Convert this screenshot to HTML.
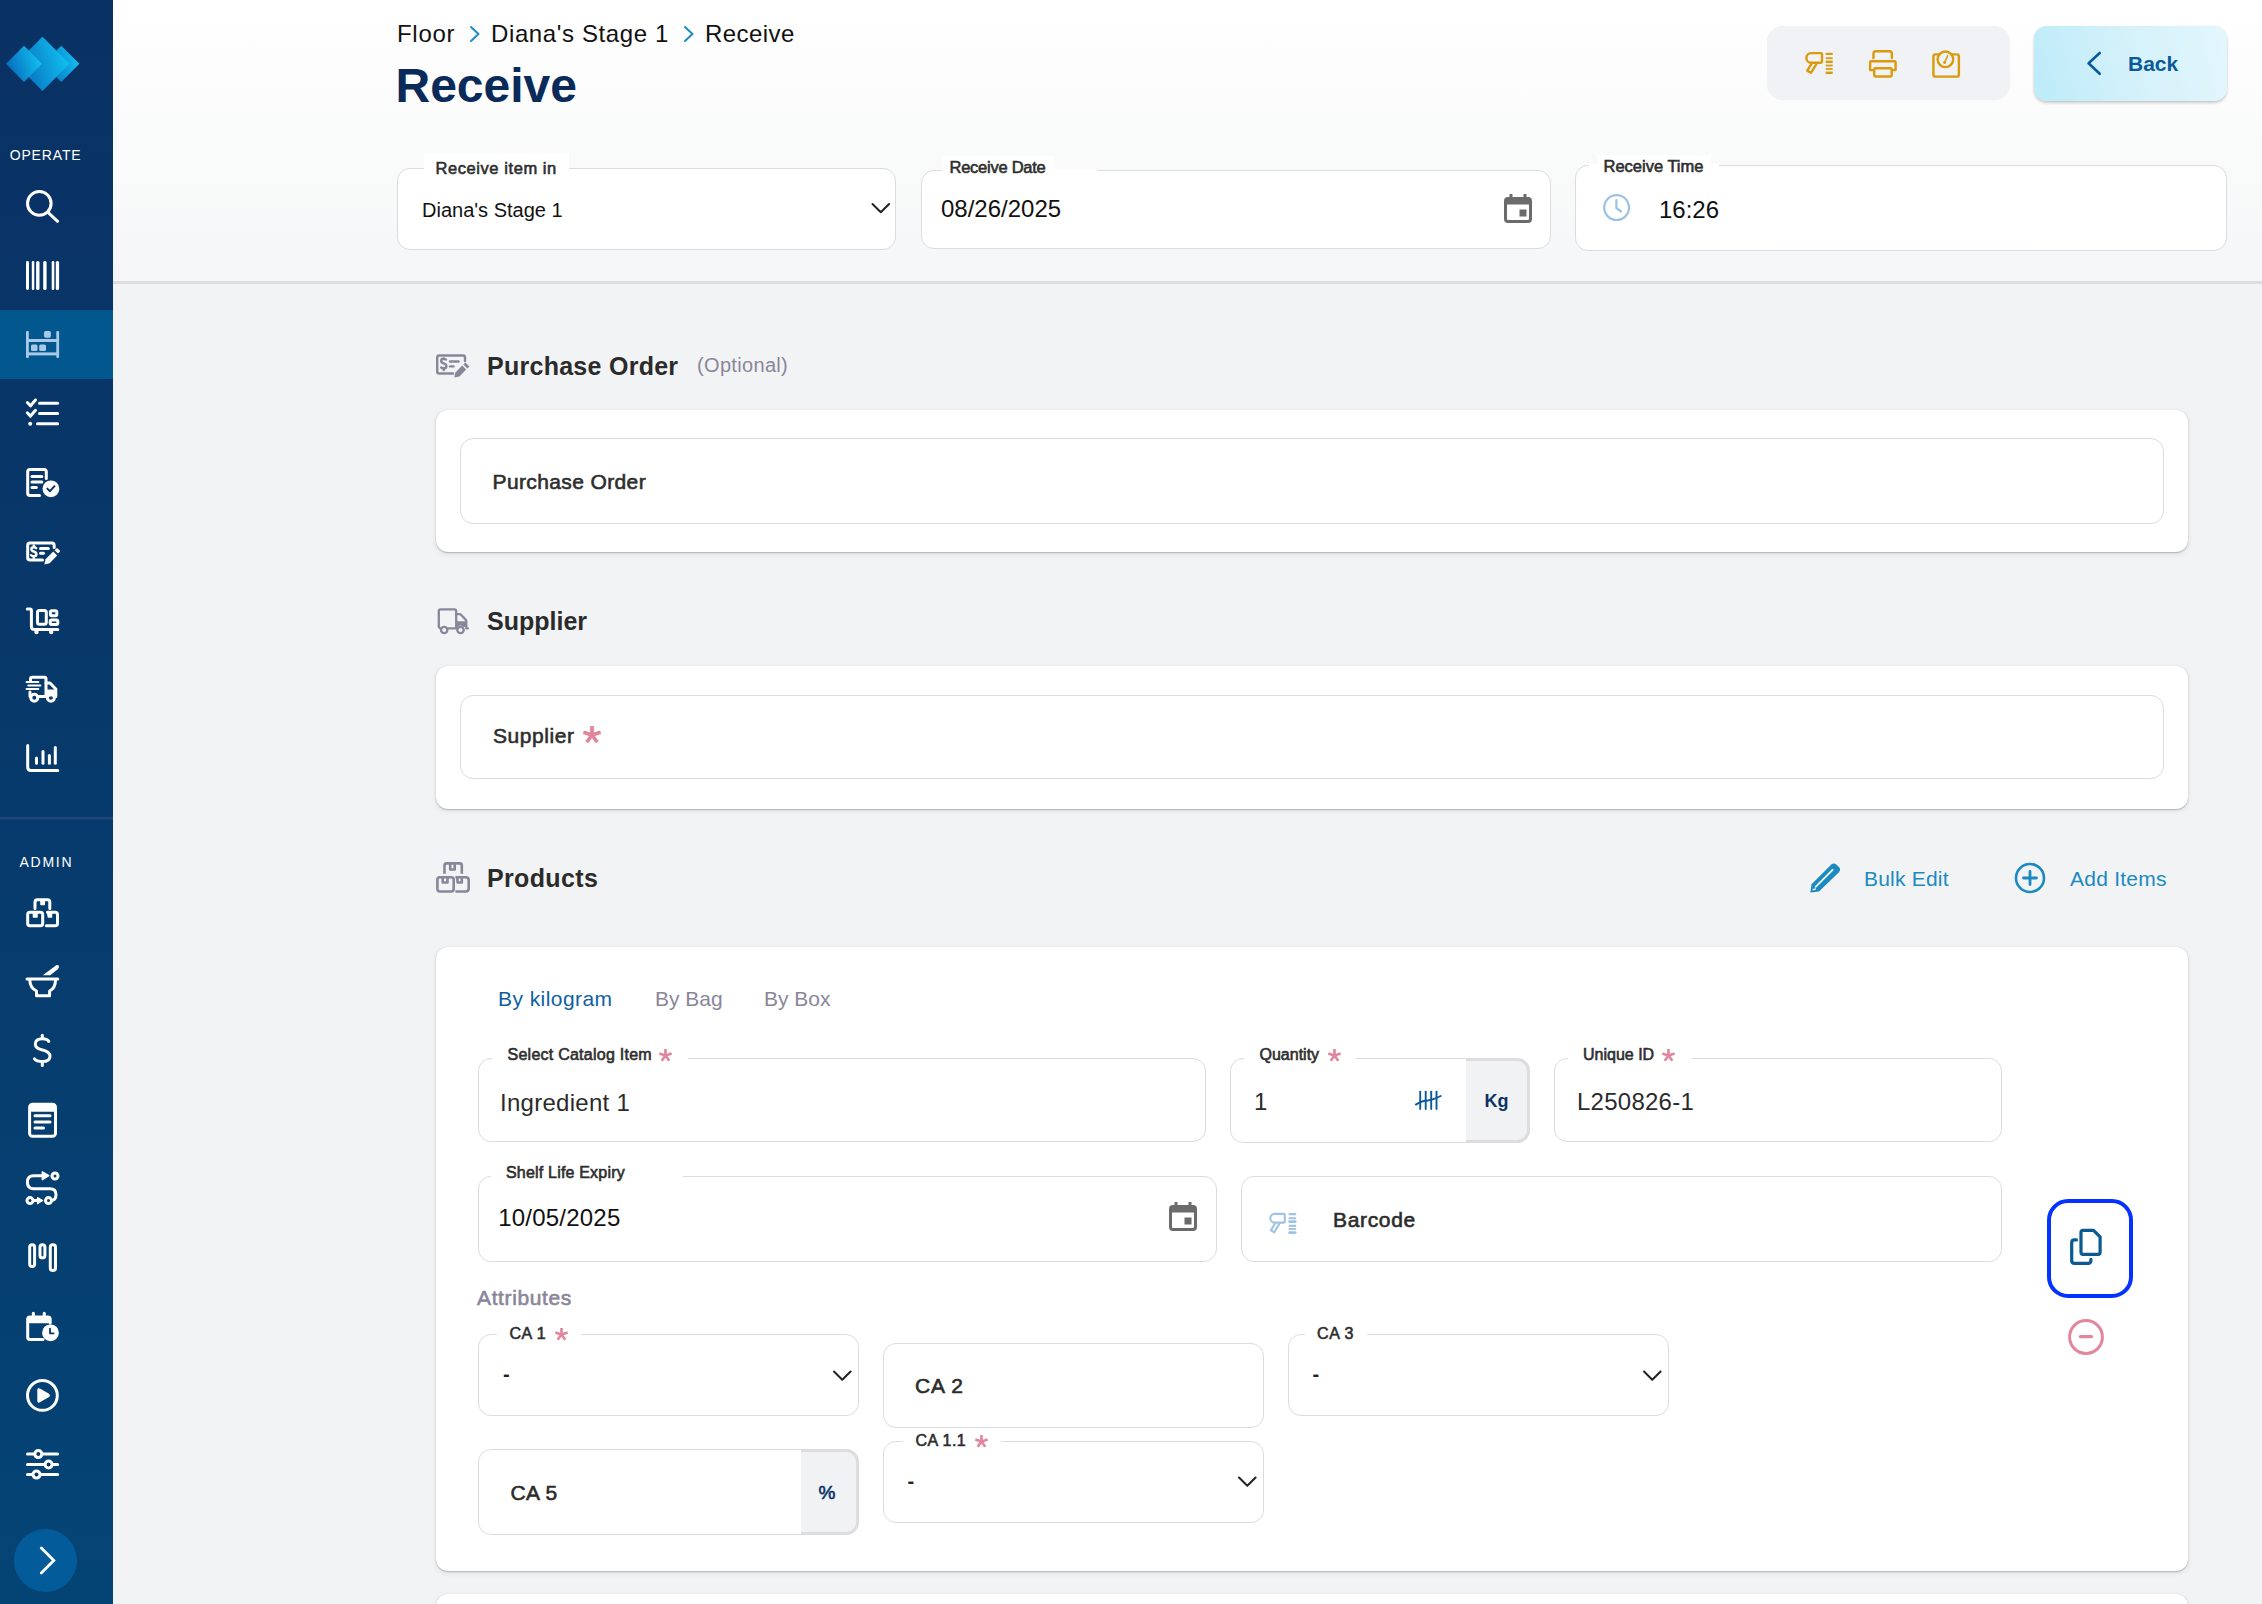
<!DOCTYPE html>
<html><head><meta charset="utf-8">
<style>
*{margin:0;padding:0;box-sizing:border-box;}
html,body{width:2262px;height:1604px;overflow:hidden;}
body{font-family:"Liberation Sans",sans-serif;background:#f2f3f5;position:relative;color:#222;}
#side{position:absolute;left:0;top:0;width:113px;height:1604px;background:linear-gradient(180deg,#0a3164 0%,#073a6c 50%,#044475 100%);}
#hdr{position:absolute;left:113px;top:0;width:2149px;height:284px;background:linear-gradient(180deg,#ffffff 0%,#f5f6f7 100%);border-bottom:3px solid #dcdddf;}
.t{position:absolute;white-space:nowrap;line-height:1;}
.m{-webkit-text-stroke:0.6px currentColor;}
.field{position:absolute;background:#fff;border:1.5px solid #dcdcdf;border-radius:13px;}
.patch{position:absolute;background:#fff;}
.card{position:absolute;background:#fff;border-radius:12px;box-shadow:0 1px 1.5px rgba(0,0,0,0.22),0 2px 6px rgba(0,0,0,0.08),0 0 1px rgba(0,0,0,0.12);}
svg{position:absolute;overflow:visible;}
</style></head>
<body>
<div id="side"></div>
<div id="hdr"></div>
<svg style="left:0px;top:30px;" width="90" height="70" viewBox="0 0 90 70"><defs>
<linearGradient id="lg1" x1="0" y1="0.7" x2="1" y2="0.35"><stop offset="0" stop-color="#0666b9"/><stop offset="1" stop-color="#12c4f2"/></linearGradient>
</defs>
<path d="M61.2 15.8 L79.4 33.8 L61.2 52 L43 33.8Z" fill="url(#lg1)"/>
<path d="M42.5 6.8 L69.5 33.8 L42.5 61 L15.5 33.8Z" fill="url(#lg1)"/>
<path d="M24 15.8 L42 33.8 L24 52 L6 33.8Z" fill="url(#lg1)"/></svg>
<div class="t" style="left:9.7px;top:148.15px;font-size:14px;color:#fff;font-weight:normal;letter-spacing:0.85px;">OPERATE</div>
<div style="position:absolute;left:0;top:310px;width:113px;height:69px;background:#03578f;"></div>
<svg style="left:0px;top:0px;" width="113" height="1604" viewBox="0 0 113 1604">
<g fill="none" stroke="#fff" stroke-width="3" stroke-linecap="round" stroke-linejoin="round">
<circle cx="39.3" cy="203.4" r="11.8"/><line x1="48" y1="212.3" x2="57.6" y2="221.3"/>
</g>
<g fill="#fff">
<rect x="26" y="261" width="3" height="29" rx="1.4"/>
<rect x="31.8" y="261" width="2.5" height="29" rx="1.2"/>
<rect x="36.1" y="261" width="3.4" height="29" rx="1.6"/>
<rect x="43.2" y="261" width="3.4" height="29" rx="1.6"/>
<rect x="51.7" y="261" width="2.6" height="29" rx="1.2"/>
<rect x="55.8" y="261" width="3.3" height="29" rx="1.6"/>
</g>
<g fill="#a9c9e7">
<rect x="26" y="331" width="2.8" height="27" rx="1"/>
<rect x="56.3" y="331" width="2.8" height="27" rx="1"/>
<rect x="27" y="339" width="31" height="3" />
<rect x="27" y="352.4" width="31" height="3" />
<rect x="44" y="331" width="6.9" height="6.7" rx="1.6"/>
<rect x="31" y="344.5" width="6.5" height="6.5" rx="1.6"/>
<rect x="39.2" y="344.5" width="6.8" height="6.5" rx="1.6"/>
</g>
<g fill="none" stroke="#fff" stroke-width="3" stroke-linecap="round" stroke-linejoin="round">
<path d="M27.3 402.5 L30.5 405.8 L35.5 400"/>
<path d="M27.3 412.8 L30.5 416.1 L35.5 410.3"/>
<line x1="39.5" y1="403.2" x2="57.6" y2="403.2"/>
<line x1="39.5" y1="413.5" x2="57.6" y2="413.5"/>
<line x1="37.5" y1="423.8" x2="57.6" y2="423.8"/>
</g>
<circle cx="30.2" cy="423.8" r="2" fill="#fff"/>
<g fill="none" stroke="#fff" stroke-width="3" stroke-linecap="round" stroke-linejoin="round">
<path d="M39.5 495.5 H30 Q27.7 495.5 27.7 493.2 V471.7 Q27.7 469.4 30 469.4 H44 Q46.3 469.4 46.3 471.7 V478.5"/>
<line x1="32" y1="476.5" x2="41.8" y2="476.5"/>
<line x1="32" y1="482" x2="41.8" y2="482"/>
<line x1="32" y1="487.4" x2="36.3" y2="487.4"/>
</g>
<circle cx="50.9" cy="488.8" r="8.4" fill="#fff"/>
<path d="M47.3 488.6 L50 491.2 L54.5 486.2" fill="none" stroke="#0a3366" stroke-width="2" stroke-linecap="round" stroke-linejoin="round"/>
<g fill="none" stroke="#fff" stroke-width="3" stroke-linecap="round" stroke-linejoin="round">
<path d="M42.5 560 H30 Q27.7 560 27.7 557.7 V545.4 Q27.7 543.1 30 543.1 H51.9 Q54.2 543.1 54.2 545.4 V547.5"/>
<line x1="40.5" y1="548.5" x2="48.3" y2="548.5"/>
<line x1="40.5" y1="553.3" x2="43.5" y2="553.3"/>
</g>
<path d="M44.3 564.6 L45.6 559.2 L53.2 551.6 L57.2 555.6 L49.6 563.2Z" fill="#fff"/>
<path d="M54.6 550.2 L56.4 548.4 Q57 547.8 57.6 548.4 L59.8 550.6 Q60.4 551.2 59.8 551.8 L58 553.6Z" fill="#fff"/>
<g fill="none" stroke="#fff" stroke-width="2.4" stroke-linecap="round" stroke-linejoin="round">
<path d="M36.2 548.2 Q35.3 547.2 33.8 547.2 Q31.4 547.2 31.4 549.2 Q31.4 550.8 33.8 551.5 Q36.4 552.3 36.4 554.3 Q36.4 556.3 33.8 556.3 Q32.2 556.3 31.2 555.2"/>
<line x1="33.8" y1="545.6" x2="33.8" y2="546.6"/><line x1="33.8" y1="556.9" x2="33.8" y2="558"/>
</g>
<g fill="none" stroke="#fff" stroke-width="3" stroke-linecap="round" stroke-linejoin="round">
<path d="M27.3 609 H30 Q31.4 609 31.4 610.4 V626.5 Q31.4 629.5 34.4 629.5 H57.8"/>
<rect x="37.5" y="610.5" width="8.8" height="13.8" rx="2"/>
<rect x="50.4" y="610.8" width="6.4" height="5" rx="1.5"/>
<rect x="50.2" y="620" width="7.6" height="4.5" rx="1.5"/>
</g>
<circle cx="36.5" cy="632" r="2.2" fill="#fff"/><circle cx="51.2" cy="632" r="2.2" fill="#fff"/>
<g fill="none" stroke="#fff" stroke-width="3" stroke-linecap="round" stroke-linejoin="round">
<path d="M30.5 681 V679 Q30.5 677.3 32.2 677.3 H44.5 Q46 677.3 46 679 V696.5 H37.5"/>
<path d="M46 683 H50 L55.8 689 V696.5 H54.5"/>
<path d="M30 692 V696.5 H30.5"/>
<circle cx="34.3" cy="697.8" r="3.5"/><circle cx="50.9" cy="697.8" r="3.5"/>
<g stroke-width="2.1"><line x1="26.6" y1="682" x2="38.3" y2="682"/>
<line x1="28.3" y1="685.5" x2="40.3" y2="685.5"/>
<line x1="26.6" y1="689" x2="38.3" y2="689"/></g>
</g>
<path d="M46 689.5 H55.8 V696.5 H46Z" fill="#fff"/>
<g fill="none" stroke="#fff" stroke-width="3" stroke-linecap="round" stroke-linejoin="round">
<path d="M27.7 745.5 V767.2 Q27.7 770.4 30.9 770.4 H57.8"/>
<line x1="36.5" y1="758" x2="36.5" y2="763.3"/>
<line x1="43" y1="751.5" x2="43" y2="763.3"/>
<line x1="49.4" y1="755.5" x2="49.4" y2="763.3"/>
<line x1="55.3" y1="747.5" x2="55.3" y2="763.3"/>
</g>
<rect x="0" y="817" width="113" height="2.5" fill="#1d4676"/>
</svg>
<div class="t" style="left:19.5px;top:855.15px;font-size:14px;color:#fff;font-weight:normal;letter-spacing:1.75px;">ADMIN</div>
<svg style="left:0px;top:0px;" width="113" height="1604" viewBox="0 0 113 1604">
<g fill="none" stroke="#fff" stroke-width="3" stroke-linecap="round" stroke-linejoin="round">
<path d="M35 908.5 V902 Q35 899.7 37.3 899.7 H47.5 Q49.8 899.7 49.8 902 V908.5"/>

<rect x="27.7" y="912.3" width="15" height="13.5" rx="2.3"/>

<path d="M46.3 925.8 H55.2 Q57.5 925.8 57.5 923.5 V914.6 Q57.5 912.3 55.2 912.3 H47.5"/>
</g>
<rect x="40.2" y="899" width="4.8" height="6.2" rx="0.8" fill="#fff"/>
<rect x="32.7" y="911" width="5.1" height="6.8" rx="0.8" fill="#fff"/>
<path d="M46.5 911 H52.2 V917.8 H47.8Z" fill="#fff"/>
<g fill="none" stroke="#fff" stroke-width="3" stroke-linecap="round" stroke-linejoin="round">
<line x1="27" y1="979" x2="57.8" y2="979"/>
<path d="M29.8 980 Q30 988 36.5 991 V995.8 H49.6 V991 Q55.5 988 55.5 980"/>
</g>
<path d="M42.8 975.3 L56.2 965.3 Q58.6 964.5 59 966.5 Q59 968 57.5 969.4 L50.2 975.3Z" fill="#fff"/>
<g fill="none" stroke="#fff" stroke-width="3" stroke-linecap="round" stroke-linejoin="round">
<path d="M48.8 1041.5 Q47.5 1038.7 42.5 1038.7 Q35.3 1038.7 35.3 1044.2 Q35.3 1048.3 42.5 1050 Q50 1051.8 50 1056.2 Q50 1061.5 42.5 1061.5 Q36.5 1061.5 34.5 1058.8"/>
<line x1="42.3" y1="1035.3" x2="42.3" y2="1038.5"/>
<line x1="42.3" y1="1061.8" x2="42.3" y2="1065.6"/>
</g>
<g fill="none" stroke="#fff" stroke-width="3" stroke-linecap="round" stroke-linejoin="round">
<rect x="29.6" y="1104.3" width="25.9" height="31.9" rx="3"/>
<line x1="35" y1="1115.8" x2="50" y2="1115.8"/>
<line x1="35" y1="1122" x2="50" y2="1122"/>
<line x1="35" y1="1128.1" x2="43.5" y2="1128.1"/>
</g>
<rect x="29.6" y="1104.3" width="25.9" height="7.5" rx="2" fill="#fff"/>
<g fill="none" stroke="#fff" stroke-width="3" stroke-linecap="round" stroke-linejoin="round">
<path d="M43.5 1175.7 H33.7 Q27.4 1175.7 27.4 1182.2 Q27.4 1188.7 33.7 1188.7 H49.8 Q56 1188.7 56 1194.5 Q56 1200 51.5 1200.6"/>
<circle cx="55" cy="1176" r="3"/>
<circle cx="30" cy="1200.6" r="3"/>
<circle cx="48.5" cy="1200.6" r="3"/>
<line x1="33.5" y1="1200.6" x2="38" y2="1200.6"/>
</g>
<path d="M42.3 1172 L48.8 1175.7 L42.3 1179.6Z" fill="#fff" stroke="#fff" stroke-width="1.5" stroke-linejoin="round"/>
<path d="M37.5 1197.5 L42.6 1200.6 L37.5 1203.7Z" fill="#fff" stroke="#fff" stroke-width="1.2" stroke-linejoin="round"/>
<g fill="none" stroke="#fff" stroke-width="3" stroke-linecap="round" stroke-linejoin="round">
<rect x="29.7" y="1244.7" width="4.9" height="21.7" rx="2.4"/>
<rect x="40" y="1244.7" width="4.9" height="13.1" rx="2.4"/>
<rect x="50.3" y="1244.7" width="5.2" height="25.8" rx="2.4"/>
</g>
<g fill="none" stroke="#fff" stroke-width="3" stroke-linecap="round" stroke-linejoin="round">
<path d="M43 1339.5 H30 Q27.7 1339.5 27.7 1337.2 V1319.2 Q27.7 1316.9 30 1316.9 H47.9 Q50.2 1316.9 50.2 1319.2 V1323"/>
<line x1="33.4" y1="1313.3" x2="33.4" y2="1316"/>
<line x1="44.3" y1="1313.3" x2="44.3" y2="1316"/>
</g>
<rect x="27.7" y="1316.9" width="22.5" height="6.3" rx="2" fill="#fff"/>
<circle cx="50.5" cy="1332.8" r="8.4" fill="#fff"/>
<path d="M50 1328.6 V1333.3 H53.6" fill="none" stroke="#0a3366" stroke-width="1.8" stroke-linecap="round" stroke-linejoin="round"/>
<g fill="none" stroke="#fff" stroke-width="3" stroke-linecap="round" stroke-linejoin="round">
<circle cx="42.4" cy="1395.4" r="14.9"/>
</g>
<path d="M38.1 1390 Q38.1 1388.4 39.5 1389.2 L48.6 1394.5 Q49.6 1395.4 48.6 1396.3 L39.5 1401.6 Q38.1 1402.4 38.1 1400.8Z" fill="#fff" stroke="#fff" stroke-width="1.6" stroke-linejoin="round"/>
<g fill="none" stroke="#fff" stroke-width="3" stroke-linecap="round" stroke-linejoin="round">
<line x1="27.5" y1="1454.1" x2="57.6" y2="1454.1"/>
<line x1="27.5" y1="1464.5" x2="57.6" y2="1464.5"/>
<line x1="27.5" y1="1474.6" x2="57.6" y2="1474.6"/>
</g>
<g fill="#0a3366" stroke="#fff" stroke-width="3">
<circle cx="38.3" cy="1454.1" r="3.5"/>
<circle cx="48.6" cy="1464.5" r="3.5"/>
<circle cx="36.5" cy="1474.6" r="3.5"/>
</g>
<circle cx="45.5" cy="1560.5" r="31.5" fill="#035c99"/>
<path d="M41.3 1548 L53.8 1560.5 L41.3 1573" fill="none" stroke="#fff" stroke-width="2.8" stroke-linecap="round" stroke-linejoin="miter"/>
</svg>
<div class="t" style="left:397px;top:21.68px;font-size:24px;color:#111;font-weight:normal;letter-spacing:0.7px;">Floor</div>
<svg style="left:468px;top:25px;" width="14" height="18" viewBox="0 0 14 18"><path d="M3 2 L10.5 9 L3 16" fill="none" stroke="#1a8bc8" stroke-width="2" stroke-linecap="round" stroke-linejoin="round"/></svg>
<div class="t" style="left:491px;top:21.68px;font-size:24px;color:#111;font-weight:normal;letter-spacing:0.62px;">Diana's Stage 1</div>
<svg style="left:682px;top:25px;" width="14" height="18" viewBox="0 0 14 18"><path d="M3 2 L10.5 9 L3 16" fill="none" stroke="#1a8bc8" stroke-width="2" stroke-linecap="round" stroke-linejoin="round"/></svg>
<div class="t" style="left:705px;top:21.68px;font-size:24px;color:#111;font-weight:normal;letter-spacing:0.45px;">Receive</div>
<div class="t" style="left:395.5px;top:62.37px;font-size:48px;color:#0a2a5a;font-weight:bold;">Receive</div>
<div style="position:absolute;left:1767px;top:26px;width:243px;height:74px;background:#f1f2f6;border-radius:16px;box-shadow:0 0 1px rgba(0,0,0,0.06);"></div>
<svg style="left:1795px;top:40px;" width="175" height="45" viewBox="0 0 175 45"><g fill="none" stroke="#d99a0b" stroke-width="2.4" stroke-linecap="round" stroke-linejoin="round">
<path d="M16.2 13.1 H25.8 Q27 13.1 27 14.3 V21.6 Q27 22.8 25.8 22.8 H16.2 A4.85 4.85 0 0 1 16.2 13.1Z"/>
<path d="M17 23.2 L12.2 30.6 L15.9 32.8 L22 23.2"/>
<g stroke-linecap="butt"><line x1="30.7" y1="13.9" x2="37.7" y2="13.9" stroke-width="2.2"/>
<line x1="30.7" y1="18.2" x2="37.7" y2="18.2" stroke-width="1.8"/>
<line x1="30.7" y1="21.8" x2="37.7" y2="21.8" stroke-width="2.5"/>
<line x1="30.7" y1="25.5" x2="37.7" y2="25.5" stroke-width="1.8"/>
<line x1="30.7" y1="29" x2="37.7" y2="29" stroke-width="1.8"/>
<line x1="30.7" y1="32.8" x2="37.7" y2="32.8" stroke-width="2.5"/></g>
<path d="M78.5 18 V13.5 Q78.5 11.2 80.8 11.2 H94.4 Q96.9 11.2 96.9 13.7 V18"/>
<path d="M77.9 30.1 H75.4 Q75.1 30.1 75.1 29.8 V22.3 Q75.1 21.3 76.1 21.3 H99.6 Q100.6 21.3 100.6 22.3 V29.8 Q100.6 30.1 100.3 30.1 H97.6"/>
<rect x="79.2" y="28.2" width="17.5" height="8.3" rx="1.2"/>
<rect x="138.4" y="14.4" width="25.5" height="22.2" rx="2.2"/>
</g>
<circle cx="150.4" cy="19.3" r="7.8" fill="#f1f2f6" stroke="#d99a0b" stroke-width="2.4"/>
<path d="M149.5 23 L152.6 15.8" stroke="#d99a0b" stroke-width="1.6" stroke-linecap="round"/>
<circle cx="149.6" cy="22.5" r="1.4" fill="#d99a0b"/>
</svg>
<div style="position:absolute;left:2034px;top:26px;width:193px;height:75px;border-radius:13px;background:linear-gradient(75deg,#bcebf8 0%,#d4f1fa 50%,#e3f6fc 100%);box-shadow:0 2px 3px rgba(0,0,0,0.20),0 0 1px rgba(0,0,0,0.15);"></div>
<svg style="left:2080px;top:48px;" width="30" height="32" viewBox="0 0 30 32"><path d="M19.7 5 L8.6 15.3 L19.7 25.8" fill="none" stroke="#0a5a9a" stroke-width="2.6" stroke-linecap="round" stroke-linejoin="round"/></svg>
<div class="t" style="left:2128px;top:53.02px;font-size:21px;color:#0a5a9a;font-weight:bold;">Back</div>
<div class="field" style="left:397px;top:168px;width:499px;height:82px;"></div>
<div class="patch" style="left:424px;top:167px;width:145px;height:4px;"></div>
<div class="patch" style="left:424px;top:153px;width:145px;height:16px;"></div>
<div class="t m" style="left:435.5px;top:160.03px;font-size:16.5px;color:#2e2e2e;font-weight:normal;letter-spacing:0.57px;">Receive item in</div>
<div class="t" style="left:422px;top:200.07px;font-size:20px;color:#111;font-weight:normal;">Diana's Stage 1</div>
<svg style="left:868px;top:198px;" width="26" height="22" viewBox="0 0 26 22"><path d="M4.5 6 L12.8 14.3 L21.1 6" fill="none" stroke="#222" stroke-width="2" stroke-linecap="round" stroke-linejoin="round"/></svg>
<div class="field" style="left:921px;top:170px;width:630px;height:79px;"></div>
<div class="patch" style="left:942px;top:169px;width:155px;height:4px;"></div>
<div class="patch" style="left:942px;top:156px;width:112px;height:16px;"></div>
<div class="t m" style="left:949.5px;top:159.03px;font-size:16.5px;color:#2e2e2e;font-weight:normal;letter-spacing:-0.25px;">Receive Date</div>
<div class="t" style="left:941px;top:196.68px;font-size:24px;color:#111;font-weight:normal;">08/26/2025</div>
<svg style="left:1504px;top:193px;" width="30" height="32" viewBox="0 0 30 32"><rect x="1.5" y="5.5" width="25" height="23" rx="2.5" fill="none" stroke="#6b6b6b" stroke-width="3"/>
<rect x="1.5" y="5.5" width="25" height="6" fill="#6b6b6b"/>
<rect x="5.5" y="1" width="3" height="5" fill="#6b6b6b"/><rect x="19.5" y="1" width="3" height="5" fill="#6b6b6b"/>
<rect x="15.5" y="16.5" width="7" height="7" fill="#6b6b6b"/></svg>
<div class="field" style="left:1575px;top:165px;width:652px;height:86px;"></div>
<div class="patch" style="left:1589px;top:164px;width:130px;height:4px;"></div>
<div class="patch" style="left:1597px;top:155px;width:114px;height:12px;"></div>
<div class="t m" style="left:1603.5px;top:158.03px;font-size:16.5px;color:#2e2e2e;font-weight:normal;">Receive Time</div>
<svg style="left:1600px;top:191px;" width="34" height="34" viewBox="0 0 34 34"><circle cx="16.6" cy="16.6" r="12.4" fill="none" stroke="#9cc2e2" stroke-width="2.2"/><path d="M16.4 9.2 V17 L21 20.5" fill="none" stroke="#9cc2e2" stroke-width="2.2" stroke-linecap="round" stroke-linejoin="round"/></svg>
<div class="t" style="left:1659px;top:197.68px;font-size:24px;color:#111;font-weight:normal;">16:26</div>
<svg style="left:428px;top:345px;" width="50" height="40" viewBox="0 0 50 40"><g fill="none" stroke="#8a8699" stroke-width="2.4" stroke-linecap="round" stroke-linejoin="round">
<path d="M25 28.5 H11.2 Q9.2 28.5 9.2 26.5 V12.5 Q9.2 10.5 11.2 10.5 H35 Q37 10.5 37 12.5 V16"/>
<path d="M18 14.5 Q16.5 13.8 15.5 13.8 Q13.2 13.8 13.2 15.9 Q13.2 17.6 15.8 18.4 Q18.4 19.3 18.4 21.2 Q18.4 23.4 15.8 23.4 Q14.3 23.4 13.2 22.5"/>
<line x1="15.8" y1="13.6" x2="15.8" y2="14"/><line x1="15.8" y1="23.5" x2="15.8" y2="25"/>
<line x1="22" y1="16.5" x2="30.5" y2="16.5"/>
<line x1="22" y1="21.4" x2="25.5" y2="21.4"/>
</g>
<path d="M26.3 32.6 L27.4 27.4 L34.2 20.6 L38.2 24.6 L31.4 31.4Z" fill="#8a8699"/>
<path d="M35.4 19.4 L37.4 17.4 L41.4 21.4 L39.4 23.4Z" fill="#8a8699"/>
</svg>
<div class="t" style="left:487px;top:353.84px;font-size:25px;color:#2b2b2b;font-weight:bold;letter-spacing:0.27px;">Purchase Order</div>
<div class="t" style="left:697px;top:355.07px;font-size:20px;color:#8a8699;font-weight:normal;letter-spacing:0.33px;">(Optional)</div>
<div class="card" style="left:436px;top:410px;width:1752px;height:142px;"></div>
<div class="field" style="left:460px;top:438px;width:1704px;height:86px;"></div>
<div class="t m" style="left:492.5px;top:471.22px;font-size:21px;color:#2e2e2e;font-weight:normal;letter-spacing:0.38px;">Purchase Order</div>
<svg style="left:428px;top:600px;" width="50" height="40" viewBox="0 0 50 40"><g fill="none" stroke="#8a8699" stroke-width="2.3" stroke-linecap="round" stroke-linejoin="round">
<path d="M10.8 26 V11.2 Q10.8 9.3 12.7 9.3 H26.3 Q28.2 9.3 28.2 11.2 V28.4 H19.5"/>
<path d="M10.8 26 Q10.8 27.8 12.2 28.4"/>
<path d="M28.2 14.2 H31.5 Q32.5 14.2 33.3 15 L37.6 19.6 Q38.3 20.4 38.3 21.5 V28.4 H39.8"/>
<circle cx="16.2" cy="30" r="3.2"/><circle cx="32.5" cy="30" r="3.2"/>
</g>
<path d="M28.2 21.2 H38.3 V27 H35.5 Q32.5 24.2 29.5 27 H28.2Z" fill="#8a8699"/>
</svg>
<div class="t" style="left:487px;top:608.84px;font-size:25px;color:#2b2b2b;font-weight:bold;">Supplier</div>
<div class="card" style="left:436px;top:666px;width:1752px;height:143px;"></div>
<div class="field" style="left:460px;top:695px;width:1704px;height:84px;"></div>
<div class="t m" style="left:493px;top:725.22px;font-size:21px;color:#2e2e2e;font-weight:normal;letter-spacing:0.55px;">Supplier</div>
<svg style="left:583.3px;top:726px;" width="19" height="19" viewBox="0 0 19 19"><g stroke="#e0869d" stroke-width="3.70" stroke-linecap="butt"><line x1="9.00" y1="9.00" x2="9.00" y2="0.00"/><line x1="9.00" y1="9.00" x2="17.56" y2="6.22"/><line x1="9.00" y1="9.00" x2="14.29" y2="16.28"/><line x1="9.00" y1="9.00" x2="3.71" y2="16.28"/><line x1="9.00" y1="9.00" x2="0.44" y2="6.22"/><circle cx="9.00" cy="9.00" r="2.20" fill="#e0869d" stroke="none"/></g></svg>
<svg style="left:428px;top:855px;" width="50" height="45" viewBox="0 0 50 45"><g fill="none" stroke="#8a8699" stroke-width="2.6" stroke-linejoin="round">
<path d="M16.5 18.7 V10.5 Q16.5 8.4 18.6 8.4 H31.7 Q33.8 8.4 33.8 10.5 V18.7"/>
<path d="M22.2 8.6 V14.5 H26.7 V8.6"/>
<rect x="9.4" y="22.2" width="16.3" height="14.3" rx="2.4"/>
<path d="M14.7 22.4 V27.5 H19.5 V22.4"/>
<path d="M27.4 36.5 H37.8 Q40.7 36.5 40.7 33.6 V25 Q40.7 22.2 37.8 22.2 H27.4"/>
<path d="M29.3 22.4 L29.6 27.5 H33.8 V22.4"/>
</g></svg>
<div class="t" style="left:487px;top:865.84px;font-size:25px;color:#2b2b2b;font-weight:bold;letter-spacing:0.35px;">Products</div>
<svg style="left:1805px;top:858px;" width="40" height="40" viewBox="0 0 40 40"><path d="M5.3 34.6 L6.6 26.3 L26.3 6.6 Q28.9 4.2 31.5 6.7 L33.9 9.1 Q36.3 11.6 33.9 14.2 L14 33.5Z" fill="#1a8ac0"/>
<path d="M10.6 28.8 L27.6 11.8" stroke="#f2f3f5" stroke-width="1.9" stroke-linecap="round"/>
<path d="M7.6 31.8 L11 30.9" stroke="#f2f3f5" stroke-width="1.4"/></svg>
<div class="t" style="left:1864px;top:868.22px;font-size:21px;color:#1a8ac0;font-weight:normal;letter-spacing:0.2px;">Bulk Edit</div>
<svg style="left:2010px;top:858px;" width="40" height="40" viewBox="0 0 40 40"><circle cx="20" cy="20" r="14" fill="none" stroke="#1a8ac0" stroke-width="2.6"/>
<path d="M20 13.5 V26.5 M13.5 20 H26.5" stroke="#1a8ac0" stroke-width="2.8" stroke-linecap="round"/></svg>
<div class="t" style="left:2070px;top:868.22px;font-size:21px;color:#1a8ac0;font-weight:normal;letter-spacing:0.25px;">Add Items</div>
<div class="card" style="left:436px;top:947px;width:1752px;height:624px;"></div>
<div class="t" style="left:498px;top:987.82px;font-size:21px;color:#0d60a3;font-weight:normal;letter-spacing:0.44px;">By kilogram</div>
<div class="t" style="left:655px;top:987.82px;font-size:21px;color:#8a8699;font-weight:normal;">By Bag</div>
<div class="t" style="left:764px;top:987.82px;font-size:21px;color:#8a8699;font-weight:normal;">By Box</div>
<div class="field" style="left:478px;top:1058px;width:728px;height:84px;"></div>
<div class="patch" style="left:492px;top:1046px;width:196px;height:14px;"></div>
<div class="t m" style="left:507.5px;top:1047.46px;font-size:16px;color:#2e2e2e;font-weight:normal;letter-spacing:0.25px;">Select Catalog Item</div>
<svg style="left:658.5px;top:1048.5px;" width="13" height="13" viewBox="0 0 13 13"><g stroke="#e0869d" stroke-width="2.66" stroke-linecap="butt"><line x1="6.48" y1="6.48" x2="6.48" y2="0.00"/><line x1="6.48" y1="6.48" x2="12.64" y2="4.48"/><line x1="6.48" y1="6.48" x2="10.29" y2="11.72"/><line x1="6.48" y1="6.48" x2="2.67" y2="11.72"/><line x1="6.48" y1="6.48" x2="0.32" y2="4.48"/><circle cx="6.48" cy="6.48" r="1.58" fill="#e0869d" stroke="none"/></g></svg>
<div class="t" style="left:500px;top:1090.68px;font-size:24px;color:#2b2b2b;font-weight:normal;letter-spacing:0.27px;">Ingredient 1</div>
<div class="field" style="left:1230px;top:1058px;width:300px;height:85px;"></div>
<div style="position:absolute;left:1465.5px;top:1058px;width:64.5px;height:85px;background:#f1f2f4;border:3px solid #dddddf;border-left:none;border-radius:0 13px 13px 0;"></div>
<div class="patch" style="left:1244px;top:1046px;width:112px;height:14px;"></div>
<div class="t m" style="left:1259.5px;top:1047.46px;font-size:16px;color:#2e2e2e;font-weight:normal;">Quantity</div>
<svg style="left:1328.2px;top:1048.5px;" width="13" height="13" viewBox="0 0 13 13"><g stroke="#e0869d" stroke-width="2.66" stroke-linecap="butt"><line x1="6.48" y1="6.48" x2="6.48" y2="0.00"/><line x1="6.48" y1="6.48" x2="12.64" y2="4.48"/><line x1="6.48" y1="6.48" x2="10.29" y2="11.72"/><line x1="6.48" y1="6.48" x2="2.67" y2="11.72"/><line x1="6.48" y1="6.48" x2="0.32" y2="4.48"/><circle cx="6.48" cy="6.48" r="1.58" fill="#e0869d" stroke="none"/></g></svg>
<div class="t" style="left:1254px;top:1090.28px;font-size:24px;color:#2b2b2b;font-weight:normal;">1</div>
<svg style="left:1410px;top:1085px;" width="36" height="30" viewBox="0 0 36 30"><g stroke="#0d5a98" stroke-width="1.9" stroke-linecap="round">
<line x1="10.2" y1="6.6" x2="10.2" y2="24"/><line x1="15.7" y1="6.6" x2="15.7" y2="24"/>
<line x1="21.2" y1="6.6" x2="21.2" y2="24"/><line x1="26.5" y1="6.6" x2="26.5" y2="24"/>
<path d="M5.8 19.6 Q12 15.5 18 15.5 Q24 14.5 30.7 11" fill="none"/></g></svg>
<div class="t" style="left:1484.5px;top:1092.26px;font-size:18px;color:#0a3366;font-weight:bold;">Kg</div>
<div class="field" style="left:1554px;top:1058px;width:448px;height:84px;"></div>
<div class="patch" style="left:1568px;top:1046px;width:124px;height:14px;"></div>
<div class="t m" style="left:1583px;top:1047.46px;font-size:16px;color:#2e2e2e;font-weight:normal;">Unique ID</div>
<svg style="left:1662.2px;top:1048.5px;" width="13" height="13" viewBox="0 0 13 13"><g stroke="#e0869d" stroke-width="2.66" stroke-linecap="butt"><line x1="6.48" y1="6.48" x2="6.48" y2="0.00"/><line x1="6.48" y1="6.48" x2="12.64" y2="4.48"/><line x1="6.48" y1="6.48" x2="10.29" y2="11.72"/><line x1="6.48" y1="6.48" x2="2.67" y2="11.72"/><line x1="6.48" y1="6.48" x2="0.32" y2="4.48"/><circle cx="6.48" cy="6.48" r="1.58" fill="#e0869d" stroke="none"/></g></svg>
<div class="t" style="left:1577px;top:1090.18px;font-size:24px;color:#2b2b2b;font-weight:normal;letter-spacing:0.25px;">L250826-1</div>
<div class="field" style="left:478px;top:1176px;width:739px;height:86px;"></div>
<div class="patch" style="left:491px;top:1164px;width:192px;height:14px;"></div>
<div class="t m" style="left:506px;top:1165.46px;font-size:16px;color:#2e2e2e;font-weight:normal;letter-spacing:0.19px;">Shelf Life Expiry</div>
<div class="t" style="left:498.2px;top:1206.18px;font-size:24px;color:#111;font-weight:normal;letter-spacing:0.22px;">10/05/2025</div>
<svg style="left:1169px;top:1201px;" width="30" height="32" viewBox="0 0 30 32"><rect x="1.5" y="5.5" width="25" height="23" rx="2.5" fill="none" stroke="#6b6b6b" stroke-width="3"/>
<rect x="1.5" y="5.5" width="25" height="6" fill="#6b6b6b"/>
<rect x="5.5" y="1" width="3" height="5" fill="#6b6b6b"/><rect x="19.5" y="1" width="3" height="5" fill="#6b6b6b"/>
<rect x="15.5" y="16.5" width="7" height="7" fill="#6b6b6b"/></svg>
<div class="field" style="left:1241px;top:1176px;width:761px;height:86px;"></div>
<svg style="left:1260px;top:1200px;" width="50" height="45" viewBox="0 0 50 45"><g fill="none" stroke="#9fc3e3" stroke-width="2.1" stroke-linecap="round" stroke-linejoin="round">
<path d="M14.6 13.9 H23.8 Q24.8 13.9 24.8 14.9 V21.6 Q24.8 22.6 23.8 22.6 H14.6 A4.35 4.35 0 0 1 14.6 13.9Z"/>
<path d="M15.3 23 L10.9 30.4 L14.3 32.3 L19.8 23"/>
<line x1="29.5" y1="14.1" x2="35.3" y2="14.1"/><line x1="29.5" y1="18.3" x2="35.3" y2="18.3"/>
<line x1="29.5" y1="21.6" x2="35.3" y2="21.6" stroke-width="2.6"/><line x1="29.5" y1="25.9" x2="35.3" y2="25.9"/>
<line x1="29.5" y1="29" x2="35.3" y2="29"/><line x1="29.5" y1="32.6" x2="35.3" y2="32.6" stroke-width="2.6"/>
</g></svg>
<div class="t m" style="left:1333px;top:1209.22px;font-size:21px;color:#2b2b2b;font-weight:normal;letter-spacing:0.67px;">Barcode</div>
<div style="position:absolute;left:2047px;top:1199px;width:86px;height:99px;border:4px solid #0433ff;border-radius:21px;background:#fff;"></div>
<svg style="left:2060px;top:1220px;" width="50" height="50" viewBox="0 0 50 50"><g fill="none" stroke="#0b5a91" stroke-width="3.2" stroke-linejoin="round" stroke-linecap="round">
<path d="M16.5 19.9 H14.5 Q11.7 19.9 11.7 22.7 V40.6 Q11.7 43.4 14.5 43.4 H28.1 Q30.9 43.4 30.9 40.6 V39.3"/>
<path d="M21 12.3 Q21 10.3 23 10.3 H33.5 L40.1 16.9 V32.3 Q40.1 34.3 38.1 34.3 H23 Q21 34.3 21 32.3Z"/>
</g></svg>
<svg style="left:2060px;top:1310px;" width="50" height="50" viewBox="0 0 50 50"><circle cx="26" cy="27" r="16.4" fill="none" stroke="#e0869d" stroke-width="3"/><line x1="20.5" y1="26.6" x2="31.5" y2="26.6" stroke="#e0869d" stroke-width="3.4" stroke-linecap="round"/></svg>
<div class="t m" style="left:477px;top:1287.22px;font-size:21px;color:#8a8699;font-weight:normal;letter-spacing:0.62px;">Attributes</div>
<div class="field" style="left:478px;top:1334px;width:381px;height:82px;"></div>
<div class="patch" style="left:497px;top:1323px;width:84px;height:13px;"></div>
<div class="t m" style="left:509.5px;top:1326.46px;font-size:16px;color:#2e2e2e;font-weight:normal;letter-spacing:0.45px;">CA 1</div>
<svg style="left:554.7px;top:1327.5px;" width="13" height="13" viewBox="0 0 13 13"><g stroke="#e0869d" stroke-width="2.66" stroke-linecap="butt"><line x1="6.48" y1="6.48" x2="6.48" y2="0.00"/><line x1="6.48" y1="6.48" x2="12.64" y2="4.48"/><line x1="6.48" y1="6.48" x2="10.29" y2="11.72"/><line x1="6.48" y1="6.48" x2="2.67" y2="11.72"/><line x1="6.48" y1="6.48" x2="0.32" y2="4.48"/><circle cx="6.48" cy="6.48" r="1.58" fill="#e0869d" stroke="none"/></g></svg>
<div class="t" style="left:503px;top:1364.07px;font-size:20px;color:#222;font-weight:bold;">-</div>
<svg style="left:830px;top:1368px;" width="26" height="20" viewBox="0 0 26 20"><path d="M4 3.5 L12.3 11.8 L20.6 3.5" fill="none" stroke="#222" stroke-width="2" stroke-linecap="round" stroke-linejoin="round"/></svg>
<div class="field" style="left:883px;top:1343px;width:381px;height:85px;"></div>
<div class="t m" style="left:915px;top:1375.22px;font-size:21px;color:#2b2b2b;font-weight:normal;letter-spacing:0.8px;">CA 2</div>
<div class="field" style="left:1288px;top:1334px;width:381px;height:82px;"></div>
<div class="patch" style="left:1305px;top:1323px;width:62px;height:13px;"></div>
<div class="t m" style="left:1317px;top:1326.46px;font-size:16px;color:#2e2e2e;font-weight:normal;letter-spacing:0.6px;">CA 3</div>
<div class="t" style="left:1312.5px;top:1364.07px;font-size:20px;color:#222;font-weight:bold;">-</div>
<svg style="left:1640px;top:1368px;" width="26" height="20" viewBox="0 0 26 20"><path d="M4 3.5 L12.3 11.8 L20.6 3.5" fill="none" stroke="#222" stroke-width="2" stroke-linecap="round" stroke-linejoin="round"/></svg>
<div class="field" style="left:478px;top:1449px;width:381px;height:86px;"></div>
<div style="position:absolute;left:800.5px;top:1449px;width:58.5px;height:86px;background:#f1f2f4;border:3px solid #dddddf;border-left:none;border-radius:0 13px 13px 0;"></div>
<div class="t m" style="left:510.5px;top:1482.22px;font-size:21px;color:#2b2b2b;font-weight:normal;letter-spacing:0.4px;">CA 5</div>
<div class="t m" style="left:818.5px;top:1483.42px;font-size:19px;color:#0a3366;font-weight:normal;">%</div>
<div class="field" style="left:883px;top:1441px;width:381px;height:82px;"></div>
<div class="patch" style="left:903px;top:1428px;width:98px;height:15px;"></div>
<div class="t m" style="left:915.5px;top:1433.46px;font-size:16px;color:#2e2e2e;font-weight:normal;letter-spacing:0.44px;">CA 1.1</div>
<svg style="left:975.3px;top:1434.5px;" width="13" height="13" viewBox="0 0 13 13"><g stroke="#e0869d" stroke-width="2.66" stroke-linecap="butt"><line x1="6.48" y1="6.48" x2="6.48" y2="0.00"/><line x1="6.48" y1="6.48" x2="12.64" y2="4.48"/><line x1="6.48" y1="6.48" x2="10.29" y2="11.72"/><line x1="6.48" y1="6.48" x2="2.67" y2="11.72"/><line x1="6.48" y1="6.48" x2="0.32" y2="4.48"/><circle cx="6.48" cy="6.48" r="1.58" fill="#e0869d" stroke="none"/></g></svg>
<div class="t" style="left:907.5px;top:1471.07px;font-size:20px;color:#222;font-weight:bold;">-</div>
<svg style="left:1235px;top:1474px;" width="26" height="20" viewBox="0 0 26 20"><path d="M4 3.5 L12.3 11.8 L20.6 3.5" fill="none" stroke="#222" stroke-width="2" stroke-linecap="round" stroke-linejoin="round"/></svg>
<div class="card" style="left:436px;top:1594px;width:1752px;height:106px;"></div>
</body></html>
